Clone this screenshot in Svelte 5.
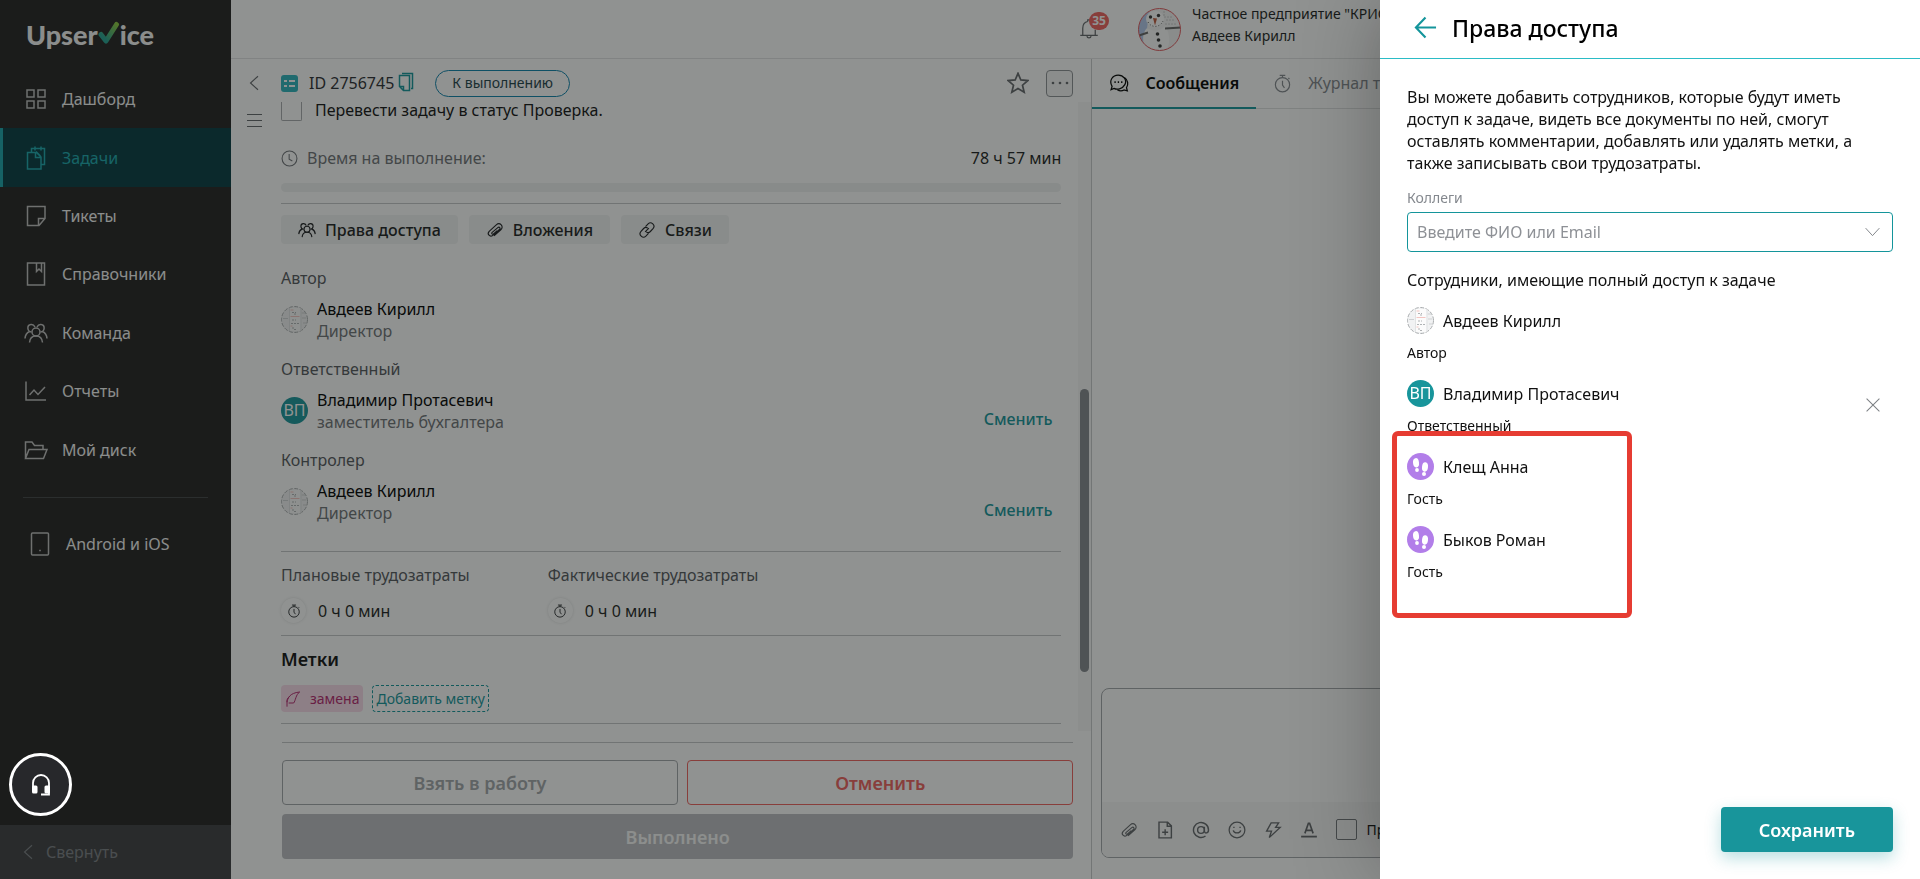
<script>
  const nav = [
    { icon: 'grid', label: 'Дашборд' },
    { icon: 'tasks', label: 'Задачи', active: true },
    { icon: 'note', label: 'Тикеты' },
    { icon: 'book', label: 'Справочники' },
    { icon: 'team', label: 'Команда' },
    { icon: 'chart', label: 'Отчеты' },
    { icon: 'folder', label: 'Мой диск' }
  ];

  const chips = [
    { icon: 'team', label: 'Права доступа' },
    { icon: 'clip', label: 'Вложения' },
    { icon: 'link', label: 'Связи' }
  ];

  const people = [
    { title: 'Автор', name: 'Авдеев Кирилл', role: 'Директор', avatar: 'doc' },
    { title: 'Ответственный', name: 'Владимир Протасевич', role: 'заместитель бухгалтера', avatar: 'initials', change: true },
    { title: 'Контролер', name: 'Авдеев Кирилл', role: 'Директор', avatar: 'doc', change: true }
  ];

  const efforts = ['Плановые трудозатраты', 'Фактические трудозатраты'];

  const members = [
    { name: 'Авдеев Кирилл', role: 'Автор', avatar: 'doc' },
    { name: 'Владимир Протасевич', role: 'Ответственный', avatar: 'initials', removable: true }
  ];

  const guests = [
    { name: 'Клещ Анна', role: 'Гость', avatar: 'guest' },
    { name: 'Быков Роман', role: 'Гость', avatar: 'guest' }
  ];

  const tools = ['clip', 'filePlus', 'at', 'smile', 'bolt', 'format'];

  const scroll = { top: 45.6, size: 45 };
</script>

{#snippet icon(name, size)}
  <svg class="icon" width={size} height={size} viewBox="0 0 24 24" fill="none" stroke="currentColor" stroke-width="1.5" aria-hidden="true">
    {#if name === 'grid'}
      <path d="M3 3h7v7H3zM14 3h7v7h-7zM3 14h7v7H3zM14 14h7v7h-7z" />
    {:else if name === 'tasks'}
      <path d="M3.5 6.5h9l4.500 4.500v12H3.500zM11.500 6.500v5h5.500M7.500 6V2.500H20.500V18.500H17.500M11 .500v4M17 .500v4M16.500 10l-4.500-4.500" />
    {:else if name === 'note'}
      <path d="M3.500 2.500h17.500v12l-6 7H3.500zM14.500 21.500v-7h6.500" />
    {:else if name === 'book'}
      <path d="M3.500 1h17v22h-17zM12.500 1v8.500l2.500-2.500 2.500 2.500V1" />
    {:else if name === 'team'}
      <circle cx="12" cy="11" r="4" />
      <path d="M5.500 21.500c.3-3.500 2.500-6.500 6.500-6.500s6.200 3 6.500 6.500M7.500 11C3 10.500 2.500 4 7 3.500c2-.2 3.200.8 4 2.500M16.500 11c4.500-.5 5-7 .5-7.500-2-.2-3.200.8-4 2.500M1 17.500c.2-3 1.500-5.500 4.500-7M23 17.500c-.2-3-1.500-5.500-4.500-7" />
    {:else if name === 'chart'}
      <path d="M2 2.500V21h20M5.500 16l4.500-5 4 4.500L21 8" />
    {:else if name === 'folder'}
      <path d="M1.500 20V4h6.500l2.500 3.500h8.500V11M1.500 20.500l3.500-9h18l-3.500 9z" />
    {:else if name === 'tablet'}
      <rect x="3.500" y="1" width="17" height="22" rx="1" />
      <path d="M11.200 18.500h1.600" />
    {:else if name === 'left'}
      <path d="M16 3l-10 9 10 9" />
    {:else if name === 'clip'}
      <path d="M8.500 15.500l7-7c1.900-1.900 4.300.5 2.400 2.400l-8 8c-3.800 3.800-9-.6-5.200-4.900l8.500-9c4.500-4.500 11 1.600 6.500 6.100l-8.500 8.600M8.500 15.500c-1.500 1.700.4 3.200 1.900 1.700l4.600-4.600" transform="rotate(4 12 12)" />
    {:else if name === 'link'}
      <path d="M10 7.500l3.500-3.700c4-4 10.500 2 6.500 6.500l-3.500 3.700c-1.600 1.600-4 1.700-5.500.5M14 16.500l-3.500 3.700c-4 4-10.500-2-6.500-6.500l3.500-3.700c1.600-1.600 4-1.700 5.500-.5M9.500 14.500l5-5" />
    {:else if name === 'filePlus'}
      <path d="M4 1.500h11.500l5 5V22.500H4zM15 1.500V7h5.500M12.200 11v8M8.200 15h8" stroke-width="1.900" />
    {:else if name === 'at'}
      <circle cx="12" cy="12" r="4.500" stroke-width="1.900" />
      <path d="M16.500 7.500V13c0 4.500 5.500 3.500 5.500-1a10 10 0 1 0-4 8" stroke-width="1.900" />
    {:else if name === 'smile'}
      <circle cx="12" cy="12" r="10.500" stroke-width="1.700" />
      <path d="M7 8.500h1.800M15.200 8.500h1.800M7 12.500c1 4.500 9 4.500 10 0" stroke-width="1.900" />
    {:else if name === 'bolt'}
      <path d="M9.500 2.500h10l-4 6h6L7 22l3-8.500H3.500z" stroke-width="1.800" />
    {:else if name === 'format'}
      <path d="M6.500 16.500L11.200 3h1.600l4.700 13.500M8.200 12.500h7.600" stroke-width="2.200" />
      <path d="M1.500 20.800h21" stroke-width="2.400" />
    {:else if name === 'timer'}
      <circle cx="12" cy="13.500" r="9" />
      <path d="M12 8.500v5.500l2.500 3.500M8.500 1.800h7M12 1.800v2.700M19.500 5l1.200 1.400" />
    {:else if name === 'clock'}
      <circle cx="12" cy="12" r="10.500" />
      <path d="M11.500 5.500V13l4.500 2.500" />
    {:else if name === 'chat'}
      <path d="M2.500 20l1.200-4C-.5 9 4.500 2.500 11 2.500s11 6 8 11.500-9.500 6.500-13 4.500z" />
      <path d="M18.500 5.500c4.500 3 5 8.500 2.500 12l1 4-4-1.200c-2 1.200-5.500 1.300-8-.3" />
      <path d="M6.500 11h1.600M10.500 11h1.600M14.500 11h1.600" stroke-width="2" />
    {:else if name === 'star'}
      <path d="M12 1.500l3.100 7.200 7.600.700-5.800 5 1.800 7.600-6.700-4.100-6.700 4.100 1.800-7.600-5.800-5 7.600-.700z" stroke-width="1.900" />
    {:else if name === 'bell'}
      <path d="M1.500 19.500h21M4.500 19.500V11c0-5 3-7.500 6-8M19.500 13v6.500M10.500 3V1h2.500M9.500 20.500c.5 3 4.500 3 5 0" />
    {:else if name === 'feather'}
      <path d="M3 23.500V17C4 11 6.500 3 22 1.500c-6 4-6 13-9 16.500H5.500M3 17c-1-3 1-6.500 4-9" stroke-width="1.500" />
    {:else if name === 'arrow'}
      <path d="M12 1.500L2 12l10 10.500M2 12h21" stroke-width="2.200" />
    {:else if name === 'down'}
      <path d="M1 5l11 12L23 5" />
    {:else if name === 'cross'}
      <path d="M1 1l22 22M23 1L1 23" stroke-width="1.800" />
    {/if}
  </svg>
{/snippet}

{#snippet avatar(kind)}
  {#if kind === 'initials'}
    <span class="avatar initials">ВП</span>
  {:else if kind === 'guest'}
    <svg class="avatar" viewBox="0 0 27 27" aria-hidden="true">
      <circle cx="13.500" cy="13.500" r="13.500" fill="#b27ee9" />
      <g fill="#fff">
        <ellipse cx="9" cy="9.800" rx="3" ry="4.700" transform="rotate(-6 9 9.800)" />
        <ellipse cx="10" cy="17" rx="1.900" ry="2" />
        <ellipse cx="18" cy="14" rx="3" ry="4.700" transform="rotate(6 18 14)" />
        <ellipse cx="17" cy="21" rx="2" ry="1.900" />
      </g>
    </svg>
  {:else}
    <svg class="avatar" viewBox="0 0 27 27" fill="none" aria-hidden="true">
      <circle cx="13.500" cy="13.500" r="13" fill="#f1f2f3" stroke="#a9acae" stroke-dasharray="4 1.500" />
      <path d="M8.500 2h11v23h-11z" fill="#fbfbfb" />
      <path d="M2 12.500h5M20.500 7h4M21 12h4M22 17h4" stroke="#cfd1d3" />
      <path d="M8.500 1.500v24M20 2v23" stroke="#e1e3e4" />
      <path d="M9.500 4h3M9.500 10.500h9M9.500 20h2" stroke="#f3c4c0" />
      <path d="M11 6.500h4M13 8h2M11 14h4M10 17.500h9M11 22h3M13 23.500h3" stroke="#b0b3b5" stroke-dasharray="2 1" />
    </svg>
  {/if}
{/snippet}

{#snippet member(person)}
  <li class="member">
    <div class="member-info">
      <div class="member-name">{@render avatar(person.avatar)}<span>{person.name}</span></div>
      <div class="member-role">{person.role}</div>
    </div>
    {#if person.removable}
      <button class="plain remove" aria-label="Удалить">{@render icon('cross', 14)}</button>
    {/if}
  </li>
{/snippet}

<div class="app">
  <nav class="sidebar">
    <a class="logo" href="#home">
      <span>Upser</span>
      <svg width="22" height="24" viewBox="0 0 22 24" fill="none" aria-hidden="true">
        <defs>
          <linearGradient id="tick" x1="0" y1="1" x2="1" y2="0">
            <stop offset="0.2" stop-color="#25a191" />
            <stop offset="1" stop-color="#8ac83f" />
          </linearGradient>
        </defs>
        <path d="M3 13.500l5 6.500L18.500 3.500" stroke="url(#tick)" stroke-width="5" stroke-linecap="round" stroke-linejoin="round" />
      </svg>
      <span>ice</span>
    </a>
    <ul class="menu">
      {#each nav as item}
        <li>
          <a class="menu-item" class:active={item.active} href="#{item.icon}">{@render icon(item.icon, 24)}<span>{item.label}</span></a>
        </li>
      {/each}
    </ul>
    <a class="menu-item apps" href="#apps">{@render icon('tablet', 24)}<span>Android и iOS</span></a>
    <button class="collapse">{@render icon('left', 18)}<span>Свернуть</span></button>
  </nav>

  <div class="workspace">
    <header class="topbar">
      <button class="plain bell" aria-label="Уведомления">
        {@render icon('bell', 20)}
        <span class="count">35</span>
      </button>
      <svg class="photo" width="43" height="43" viewBox="0 0 43 43" aria-hidden="true">
        <defs><clipPath id="round"><circle cx="21.500" cy="21.500" r="21" /></clipPath></defs>
        <g clip-path="url(#round)">
          <path d="M0 0h43v43H0z" fill="#f3f3f3" />
          <path d="M0 0h12L9 20l7 8-4 15H0z" fill="#b3c9ec" />
          <ellipse cx="17" cy="11" rx="9" ry="8" fill="#fff" />
          <path d="M9 20c6 4 14 3 18-2 6 8 5 19 1 25H8C4 34 4 25 9 20z" fill="#fdfdfd" />
          <path d="M27 20.500l16-1M1 27.500l9-3" stroke="#666" stroke-width="2" />
          <path d="M15 10l4 .5-2 7z" fill="#c05a3c" />
          <g fill="#333"><circle cx="12.500" cy="9" r="1.700" /><circle cx="20.500" cy="7.500" r="1.700" /><circle cx="19.500" cy="26" r="1.800" /><circle cx="20.500" cy="32" r="1.800" /><circle cx="22" cy="38" r="1.800" /></g>
          <path d="M10 14c3 6 12 6 15-1" fill="none" stroke="#555" stroke-dasharray="1 2" />
          <path d="M26 3v6h8M28 12h9M27 16h12" fill="none" stroke="#ccc" stroke-dasharray="2 1" />
        </g>
        <circle cx="21.500" cy="21.500" r="21" fill="none" stroke="#e25a5e" />
      </svg>
      <div class="account">
        <div>Частное предприятие "КРИС</div>
        <div>Авдеев Кирилл</div>
      </div>
    </header>

    <div class="columns">
      <section class="task">
        <div class="rail">
          <button class="plain" aria-label="Назад">{@render icon('left', 18)}</button>
          <button class="plain" aria-label="Меню">
            <svg width="16" height="14" viewBox="0 0 16 14" stroke="currentColor" aria-hidden="true"><path d="M0 1.500h15M0 7.500h15M0 13.500h15" /></svg>
          </button>
        </div>
        <div class="task-main">
          <header class="task-head">
            <svg width="17" height="17" viewBox="0 0 17 17" aria-hidden="true">
              <rect width="17" height="17" rx="3" fill="#2db4bd" />
              <path d="M3 6h3M3 11h3M8 6h6M8 11h6" stroke="#fff" stroke-width="2" />
            </svg>
            <span class="task-id">ID 2756745</span>
            <button class="plain copy" aria-label="Копировать">
              <svg width="16" height="20" viewBox="0 0 16 20" fill="none" stroke="currentColor" stroke-width="1.500" aria-hidden="true">
                <path d="M4 1.500h10.500v15H13" />
                <path d="M1.500 3.500h10v15h-6l-4-4zM1.500 14.500h4v4" />
              </svg>
            </button>
            <span class="status">К выполнению</span>
            <button class="plain star" aria-label="В избранное">{@render icon('star', 22)}</button>
            <button class="more" aria-label="Ещё">
              <svg width="18" height="4" viewBox="0 0 18 4" fill="currentColor" aria-hidden="true"><circle cx="2" cy="2" r="1.300" /><circle cx="9" cy="2" r="1.300" /><circle cx="16" cy="2" r="1.300" /></svg>
            </button>
          </header>

          <div class="scroller">
            <div class="details">
              <label class="check-row"><input type="checkbox" /><span>Перевести задачу в статус Проверка.</span></label>
              <div class="time">
                {@render icon('clock', 17)}
                <span class="muted">Время на выполнение:</span>
                <span class="time-left">78 ч 57 мин</span>
              </div>
              <div class="progress"></div>
              <hr />
              <div class="chips">
                {#each chips as chip}
                  <button class="chip">{@render icon(chip.icon, 18)}<span>{chip.label}</span></button>
                {/each}
              </div>
              <div class="people">
                {#each people as person}
                  <section class="person">
                    <h3>{person.title}</h3>
                    <div class="person-row">
                      {@render avatar(person.avatar)}
                      <div>
                        <div class="strong">{person.name}</div>
                        <div class="muted">{person.role}</div>
                      </div>
                      {#if person.change}<button class="plain change">Сменить</button>{/if}
                    </div>
                  </section>
                {/each}
              </div>
              <hr />
              <div class="efforts">
                {#each efforts as title}
                  <div>
                    <h3>{title}</h3>
                    <div class="effort"><span class="effort-icon">{@render icon('timer', 14)}</span><span>0 ч 0 мин</span></div>
                  </div>
                {/each}
              </div>
              <hr />
              <h2>Метки</h2>
              <div class="tags">
                <span class="tag">{@render icon('feather', 16)}<span>замена</span></span>
                <button class="add-tag">Добавить метку</button>
              </div>
              <hr />
            </div>
            <div class="track">
              <div class="thumb" style="top: {scroll.top}%; height: {scroll.size}%"></div>
            </div>
          </div>

          <footer class="actions">
            <button class="outline">Взять в работу</button>
            <button class="outline danger">Отменить</button>
            <button class="done">Выполнено</button>
          </footer>
        </div>
      </section>

      <section class="chat">
        <div class="tabs">
          <button class="tab current">{@render icon('chat', 20)}<span>Сообщения</span></button>
          <button class="tab">{@render icon('timer', 19)}<span>Журнал т</span></button>
        </div>
        <div class="composer">
          <textarea aria-label="Сообщение"></textarea>
          <div class="toolbar">
            {#each tools as tool}
              <button class="plain" aria-label={tool}>{@render icon(tool, 18)}</button>
            {/each}
            <label class="private"><input type="checkbox" /><span>Пр</span></label>
          </div>
        </div>
      </section>
    </div>
  </div>
</div>

<div class="overlay"></div>

<button class="support" aria-label="Поддержка">
  <svg width="22" height="24" viewBox="0 0 22 24" fill="none" aria-hidden="true">
    <path d="M3 15v-5a8 8 0 0 1 16 0v11.500h-8" stroke="#fff" stroke-width="1.800" />
    <rect x="2" y="12.500" width="5.500" height="8" rx="1.500" fill="#fff" />
    <rect x="14.500" y="12.500" width="5.500" height="8" rx="1.500" fill="#fff" />
  </svg>
</button>

<aside class="drawer">
  <header class="drawer-head">
    <button class="plain back" aria-label="Назад">{@render icon('arrow', 23)}</button>
    <h1>Права доступа</h1>
  </header>
  <div class="drawer-body">
    <p>Вы можете добавить сотрудников, которые будут иметь доступ к задаче, видеть все документы по ней, смогут оставлять комментарии, добавлять или удалять метки, а также записывать свои трудозатраты.</p>
    <label class="field-label" for="colleagues">Коллеги</label>
    <div class="combo">
      <input id="colleagues" type="text" placeholder="Введите ФИО или Email" />
      {@render icon('down', 15)}
    </div>
    <h2 class="list-title">Сотрудники, имеющие полный доступ к задаче</h2>
    <ul class="members">
      {#each members as person}{@render member(person)}{/each}
    </ul>
    <div class="guests">
      <ul class="members">
        {#each guests as person}{@render member(person)}{/each}
      </ul>
      <div class="highlight"></div>
    </div>
  </div>
  <footer class="drawer-foot"><button class="save">Сохранить</button></footer>
</aside>

<style>
  :global(body) {
    margin: 0;
    background: #fff;
    color: #1c1e21;
    font: 16px/22px 'Noto Sans', 'Open Sans', sans-serif;
  }

  .app, .app *, .drawer, .drawer *, .support { box-sizing: border-box; }
  button, input, textarea { font: inherit; color: inherit; margin: 0; }
  button { cursor: pointer; }
  ul { list-style: none; margin: 0; padding: 0; }
  h1, h2, h3, p { margin: 0; font: inherit; }
  a { color: inherit; text-decoration: none; }
  .icon { flex: none; display: block; }
  svg { display: block; }
  .plain { border: 0; padding: 0; background: none; display: flex; align-items: center; justify-content: center; }
  .muted { color: #6e7176; }
  .strong { color: #000; }

  .app { display: flex; height: 100vh; overflow: hidden; }

  /* Sidebar */
  .sidebar { flex: none; width: 231px; display: flex; flex-direction: column; background: #222020; color: #f5f5f5; }
  .logo { display: flex; height: 70px; padding-left: 26px; align-items: center; font: 900 27px/32px Lato, sans-serif; }
  .logo svg { margin: 0 0 4px; }
  .menu { display: flex; flex-direction: column; height: 409px; margin-bottom: 18px; }
  .menu li { flex: 1; display: flex; }
  .menu-item { flex: 1; display: flex; align-items: center; gap: 14px; padding-left: 21px; border-left: 3px solid transparent; }
  .menu-item .icon { opacity: 0.75; }
  .active { background: #043a40; border-color: #1aa5ac; color: #1ba9b0; }
  .active .icon { opacity: 1; }
  .apps { flex: none; gap: 14px; margin: 0 23px; padding: 34px 0 34px 5px; border: 0; border-top: 1px solid #414244; }
  .collapse { margin-top: auto; height: 54px; border: 0; background: #3d3e41; color: #7c7f84; display: flex; align-items: center; gap: 8px; padding: 0 20px; }

  /* Top bar */
  .workspace { flex: 1; min-width: 0; display: flex; flex-direction: column; }
  .topbar { height: 59px; display: flex; align-items: center; padding-left: 848px; border-bottom: 1px solid #e2e3e4; }
  .bell { position: relative; color: #63666a; }
  .count { position: absolute; left: 10px; top: -7px; width: 20px; border-radius: 9px; background: #f0605d; color: #fff; font: 700 12px/18px 'Noto Sans', sans-serif; text-align: center; }
  .photo { flex: none; margin: 0 11px 0 39px; }
  .account { font-size: 14px; white-space: nowrap; padding-bottom: 8px; }

  .columns { flex: 1; min-height: 0; display: grid; grid-template-columns: 51% 1fr; grid-template-rows: minmax(0, 1fr); }

  /* Task */
  .task { min-width: 0; display: flex; border-right: 1px solid #c9cbcd; }
  .rail { flex: none; width: 50px; padding: 12px 3px 0 0; display: flex; flex-direction: column; align-items: center; gap: 13px; color: #63666a; }
  .rail .plain { height: 24px; }
  .task-main { flex: 1; min-width: 0; display: flex; flex-direction: column; }
  .task-head { flex: none; height: 43px; display: flex; align-items: center; padding: 5px 18px 0 0; color: #2b2d31; }
  .task-id { margin: 0 4px 0 11px; }
  .copy { color: #14959b; margin-bottom: 2px; }
  .status { margin-left: 21px; height: 27px; padding: 0 16px; border: 1px solid #0d82ad; border-radius: 14px; font-size: 14px; line-height: 24px; color: #1d4149; }
  .star { margin: 0 17px 0 auto; color: #63666a; }
  .more { width: 27px; height: 27px; padding: 0; display: grid; place-items: center; border: 1px solid #8d9094; border-radius: 4px; background: #f5f5f5; color: #63666a; }

  .scroller { flex: 1; min-height: 0; display: flex; }
  .details { flex: 1; min-width: 0; margin: -3px 17px 0 0; }
  .track { position: relative; flex: none; width: 13px; background: #f8f8f8; }
  .thumb { position: absolute; left: 2px; width: 9px; border-radius: 5px; background: #84888e; }
  hr { border: 0; margin: 11px 0; height: 1px; background: #c4c6c9; }

  .check-row { display: flex; align-items: flex-end; gap: 13px; height: 22px; color: #111; }
  input[type='checkbox'] { appearance: none; flex: none; width: 21px; height: 21px; border: 1px solid #a8abae; border-radius: 2px; background: transparent; }
  .check-row input[type='checkbox'] { height: 19px; border-top: 0; border-radius: 0 0 2px 2px; }
  .time { display: flex; align-items: center; gap: 9px; margin: 26px 0 14px; color: #6e7176; }
  .time-left { margin-left: auto; color: #1c1e21; }
  .progress { height: 9px; border-radius: 5px; background: #f0f1f1; }
  .chips { display: flex; gap: 11px; }
  .chip { display: flex; align-items: center; gap: 9px; height: 29px; padding: 0 17px; border: 0; border-radius: 4px; background: #f2f3f3; font-weight: 500; color: #1c1e21; }
  .people { margin-top: 23px; }
  .person { padding-bottom: 16px; }
  h3 { color: #54575c; }
  .person-row { display: flex; align-items: center; gap: 9px; margin-top: 9px; }
  .person-row .avatar { margin-bottom: 2px; }
  .change { align-self: flex-end; margin-left: auto; height: 28px; padding: 0 9px; color: #14959b; font-weight: 500; }
  .avatar { flex: none; width: 27px; height: 27px; }
  .initials { border-radius: 50%; background: #18959b; color: #fff; text-align: center; line-height: 27px; }
  .efforts { display: flex; gap: 78px; margin: 12px 0; }
  .effort { display: flex; align-items: center; gap: 12px; margin-top: 12px; }
  .effort-icon { display: grid; place-items: center; width: 25px; height: 25px; border-radius: 50%; background: #fff; box-shadow: 0 0 3px #dcdddd; }
  .details h2 { font-size: 18px; font-weight: 600; color: #111; margin-top: 12px; }
  .tags { display: flex; gap: 9px; margin-top: 15px; font-size: 14px; }
  .tag { display: flex; align-items: center; gap: 9px; height: 27px; padding: 0 4px; border-radius: 4px; background: #fadcea; color: #b5266f; }
  .add-tag { height: 27px; padding: 0 3px; border: 1px dashed #14959b; border-radius: 4px; background: none; color: #14959b; line-height: 24px; }

  .actions { flex: none; display: grid; grid-template-columns: 41fr 40fr; gap: 9px; margin: 11px 18px 20px 1px; padding-top: 17px; border-top: 1px solid #c4c6c9; }
  .outline, .done { height: 45px; border-radius: 4px; font-size: 18px; font-weight: 600; }
  .outline { border: 1px solid #a3a6aa; background: none; color: #a3a6aa; }
  .danger { border-color: #f0605d; color: #f0605d; }
  .done { grid-column: 1 / -1; border: 0; background: #bdbec2; color: #f7f7f7; }

  /* Chat */
  .chat { min-width: 0; display: flex; flex-direction: column; overflow: hidden; }
  .tabs { display: flex; height: 50px; border-bottom: 1px solid #dfe0e1; }
  .tab { display: flex; align-items: center; gap: 16px; height: 50px; padding: 0 17px; border: 0; border-bottom: 2px solid transparent; background: none; color: #84888e; white-space: nowrap; }
  .current { border-color: #14959b; color: #000; font-weight: 600; }
  .composer { margin: auto 9px 21px; border: 1px solid #a3a6aa; border-radius: 8px; overflow: hidden; display: flex; flex-direction: column; }
  textarea { height: 113px; border: 0; resize: none; background: none; padding: 12px; outline: 0; }
  .toolbar { display: flex; align-items: center; gap: 18px; height: 55px; padding-left: 18px; background: #f8f8f8; color: #63666a; }
  .private { display: flex; align-items: center; gap: 9px; font-size: 14px; color: #111; }
  .private input { border-color: #73767a; }

  /* Layers above the workspace */
  .overlay { position: fixed; inset: 0; background: rgba(20, 24, 22, 0.47); }
  .support { position: fixed; left: 9px; bottom: 63px; width: 63px; height: 63px; padding: 0; display: grid; place-items: center; border: 3px solid #fff; border-radius: 50%; background: #27282b; }

  .drawer { position: fixed; top: 0; right: 0; bottom: 0; width: 540px; max-width: 100%; display: flex; flex-direction: column; background: #fff; color: #111; box-shadow: 0 0 80px rgba(0, 0, 0, 0.3); }
  .drawer-head { height: 59px; display: flex; align-items: center; gap: 15px; padding: 0 34px 3px; border-bottom: 1px solid #2bbcc6; }
  .back { color: #14959b; }
  h1 { font-size: 23px; line-height: 32px; font-weight: 500; color: #000; }
  .drawer-body { flex: 1; padding: 27px 27px 0; }
  p { padding-right: 30px; }
  .field-label { display: block; margin: 13px 0 3px; font-size: 14px; color: #84888e; }
  .combo { display: flex; align-items: center; height: 40px; padding: 0 12px 0 9px; border: 1px solid #14959b; border-radius: 4px; color: #7d8185; }
  .combo input { flex: 1; min-width: 0; padding: 0; border: 0; outline: 0; background: none; }
  .combo input::placeholder { color: #8e9196; opacity: 1; }
  .list-title { margin: 17px 0 16px; }
  .member { display: flex; align-items: center; justify-content: space-between; height: 73px; }
  .member-info { display: flex; flex-direction: column; gap: 8px; height: 73px; }
  .member-name { display: flex; align-items: center; gap: 9px; }
  .member-role { font-size: 14px; }
  .remove { padding: 0 13px; margin-bottom: 24px; color: #7d8185; }
  .guests { position: relative; width: 210px; }
  .highlight { position: absolute; top: -22px; left: -15px; width: 240px; height: 187px; border: 5px solid #e63c32; border-radius: 6px; }
  .drawer-foot { display: flex; justify-content: flex-end; padding: 0 27px 27px; }
  .save { height: 45px; padding: 0 38px; border: 0; border-radius: 4px; background: #18959b; color: #fff; font-size: 18px; font-weight: 600; box-shadow: 0 6px 16px rgba(24, 149, 155, 0.3); }
</style>
